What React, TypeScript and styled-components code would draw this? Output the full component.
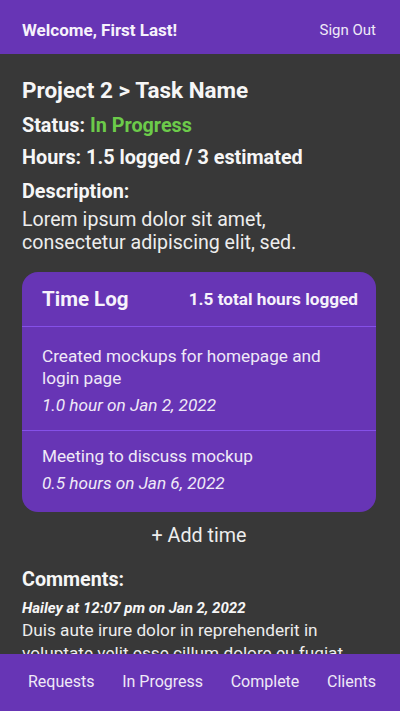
import React from "react";
import styled, { createGlobalStyle } from "styled-components";

const Global = createGlobalStyle`
  html, body { margin: 0; padding: 0; }
  body { font-family: Roboto, "Noto Sans", sans-serif; background: #383838; color: #f4f4f4; }
  * { box-sizing: border-box; }
`;

const Shell = styled.div`
  display: flex;
  flex-direction: column;
  height: 100vh;
  width: 100%;
  background: #383838;
`;

const TopBar = styled.header`
  flex: 0 0 54px;
  display: flex;
  align-items: center;
  justify-content: space-between;
  padding: 5px 24px 0 22px;
  background: #6735b5;
`;

const Welcome = styled.span`
  font-size: 17px;
  font-weight: 700;
  color: #f6f2fb;
`;

const SignOut = styled.button`
  background: none;
  border: none;
  padding: 0;
  font-family: inherit;
  font-size: 15px;
  color: #efe9f7;
`;

const Main = styled.main`
  flex: 1 1 auto;
  min-height: 0;
  overflow: hidden;
  padding: 22px 24px 0 22px;
  display: flex;
  flex-direction: column;
  & > * { flex-shrink: 0; }
`;

const Title = styled.h1`
  margin: 0;
  font-size: 22.5px;
  line-height: 28px;
  font-weight: 700;
  color: #f6f6f6;
`;

const Field = styled.div<{ $mt: number }>`
  margin-top: ${(p) => p.$mt}px;
  font-size: 19.8px;
  line-height: 24px;
  font-weight: 700;
  color: #f6f6f6;
`;

const Green = styled.span`
  color: #6ccb4a;
`;

const Paragraph = styled.p`
  margin: 4px 0 0 0;
  font-size: 19.6px;
  line-height: 23px;
  font-weight: 400;
  color: #ededed;
`;

const Card = styled.section`
  margin-top: 18px;
  background: #6735b5;
  border-radius: 16px;
  overflow: hidden;
`;

const CardHead = styled.div`
  height: 55px;
  display: flex;
  align-items: center;
  justify-content: space-between;
  padding: 0 18px 0 20px;
  border-bottom: 1px solid #8550e8;
`;

const CardTitle = styled.h2`
  margin: 0;
  font-size: 20.5px;
  font-weight: 700;
  color: #f6f2fb;
`;

const Total = styled.span`
  font-size: 17.2px;
  font-weight: 700;
  color: #f6f2fb;
`;

const Entry = styled.div<{ $last?: boolean }>`
  padding: ${(p) => (p.$last ? "14px 20px 18px 20px" : "18px 20px 14px 20px")};
  border-bottom: ${(p) => (p.$last ? "none" : "1px solid #8550e8")};
`;

const EntryText = styled.div`
  font-size: 17.2px;
  line-height: 22px;
  color: #efe9f7;
`;

const EntryMeta = styled.div`
  margin-top: 5px;
  font-size: 17.2px;
  line-height: 22px;
  font-style: italic;
  color: #efe9f7;
`;

const AddTime = styled.button`
  align-self: center;
  margin-top: 12px;
  background: none;
  border: none;
  padding: 0;
  font-family: inherit;
  font-size: 19.7px;
  line-height: 24px;
  color: #ededed;
`;

const CommentHead = styled.h3`
  margin: 20px 0 0 0;
  font-size: 19.7px;
  line-height: 24px;
  font-weight: 700;
  color: #f6f6f6;
`;

const CommentMeta = styled.div`
  margin-top: 7px;
  font-size: 15px;
  line-height: 18px;
  font-weight: 700;
  font-style: italic;
  color: #f6f6f6;
`;

const CommentBody = styled.p`
  margin: 2px 0 0 0;
  font-size: 17.2px;
  line-height: 23px;
  color: #ededed;
`;

const BottomNav = styled.nav`
  flex: 0 0 57px;
  display: flex;
  align-items: center;
  justify-content: space-between;
  padding: 0 24px 2px 28px;
  background: #6735b5;
`;

const Tab = styled.button`
  background: none;
  border: none;
  padding: 0;
  font-family: inherit;
  font-size: 16px;
  color: #efe9f7;
`;

export default function App() {
  return (
    <>
      <Global />
      <Shell>
        <TopBar>
          <Welcome>Welcome, First Last!</Welcome>
          <SignOut>Sign Out</SignOut>
        </TopBar>
        <Main>
          <Title>Project 2 &gt; Task Name</Title>
          <Field $mt={10}>
            Status: <Green>In Progress</Green>
          </Field>
          <Field $mt={8}>Hours: 1.5 logged / 3 estimated</Field>
          <Field $mt={10}>Description:</Field>
          <Paragraph>
            Lorem ipsum dolor sit amet,
            <br />
            consectetur adipiscing elit, sed.
          </Paragraph>
          <Card>
            <CardHead>
              <CardTitle>Time Log</CardTitle>
              <Total>1.5 total hours logged</Total>
            </CardHead>
            <Entry>
              <EntryText>
                Created mockups for homepage and
                <br />
                login page
              </EntryText>
              <EntryMeta>1.0 hour on Jan 2, 2022</EntryMeta>
            </Entry>
            <Entry $last>
              <EntryText>Meeting to discuss mockup</EntryText>
              <EntryMeta>0.5 hours on Jan 6, 2022</EntryMeta>
            </Entry>
          </Card>
          <AddTime>+ Add time</AddTime>
          <CommentHead>Comments:</CommentHead>
          <CommentMeta>Hailey at 12:07 pm on Jan 2, 2022</CommentMeta>
          <CommentBody>
            Duis aute irure dolor in reprehenderit in voluptate velit esse cillum dolore eu fugiat nulla pariatur.
          </CommentBody>
        </Main>
        <BottomNav>
          <Tab>Requests</Tab>
          <Tab>In Progress</Tab>
          <Tab>Complete</Tab>
          <Tab>Clients</Tab>
        </BottomNav>
      </Shell>
    </>
  );
}
